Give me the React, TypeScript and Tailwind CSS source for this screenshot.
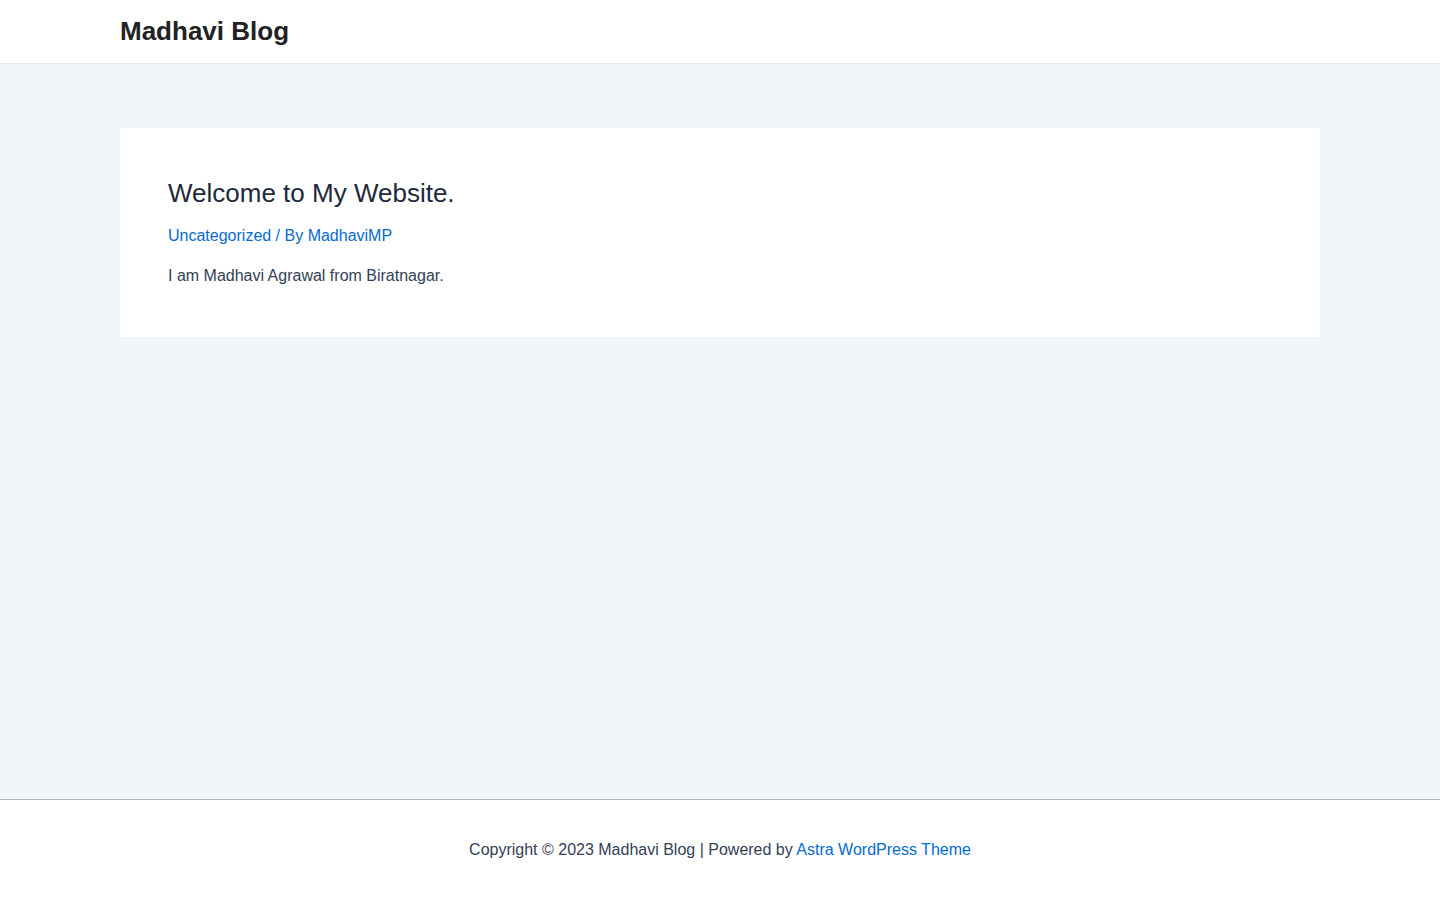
import React from 'react';

export default function App() {
  return (
    <div className="min-h-screen flex flex-col bg-[#f0f5fa] font-['Liberation_Sans',Arial,sans-serif] text-[#334155]">
      <header className="bg-white border-b border-[#eaeaea] h-[64px]">
        <div className="max-w-[1200px] mx-auto h-full flex items-center pb-[2px]">
          <a href="#" className="text-[26px] font-bold text-[#222] leading-none">
            Madhavi Blog
          </a>
        </div>
      </header>

      <main className="flex-1 pt-[64px]">
        <article className="max-w-[1200px] mx-auto bg-white px-[48px] pt-[47px] pb-[48px]">
          <h2 className="text-[26px] leading-[1.4] text-[#1e293b]">Welcome to My Website.</h2>
          <div className="mt-[12px] text-[16px] leading-[1.6] text-[#046bd2]">
            <a href="#">Uncategorized</a> / By <a href="#">MadhaviMP</a>
          </div>
          <p className="mt-[14px] text-[16px] leading-[1.6]">I am Madhavi Agrawal from Biratnagar.</p>
        </article>
      </main>

      <footer className="bg-white border-t border-[#b5b9bd] h-[101px] flex items-center justify-center">
        <p className="text-[16px] text-[#334155]">
          Copyright © 2023 Madhavi Blog | Powered by{' '}
          <a href="#" className="text-[#046bd2]">Astra WordPress Theme</a>
        </p>
      </footer>
    </div>
  );
}
